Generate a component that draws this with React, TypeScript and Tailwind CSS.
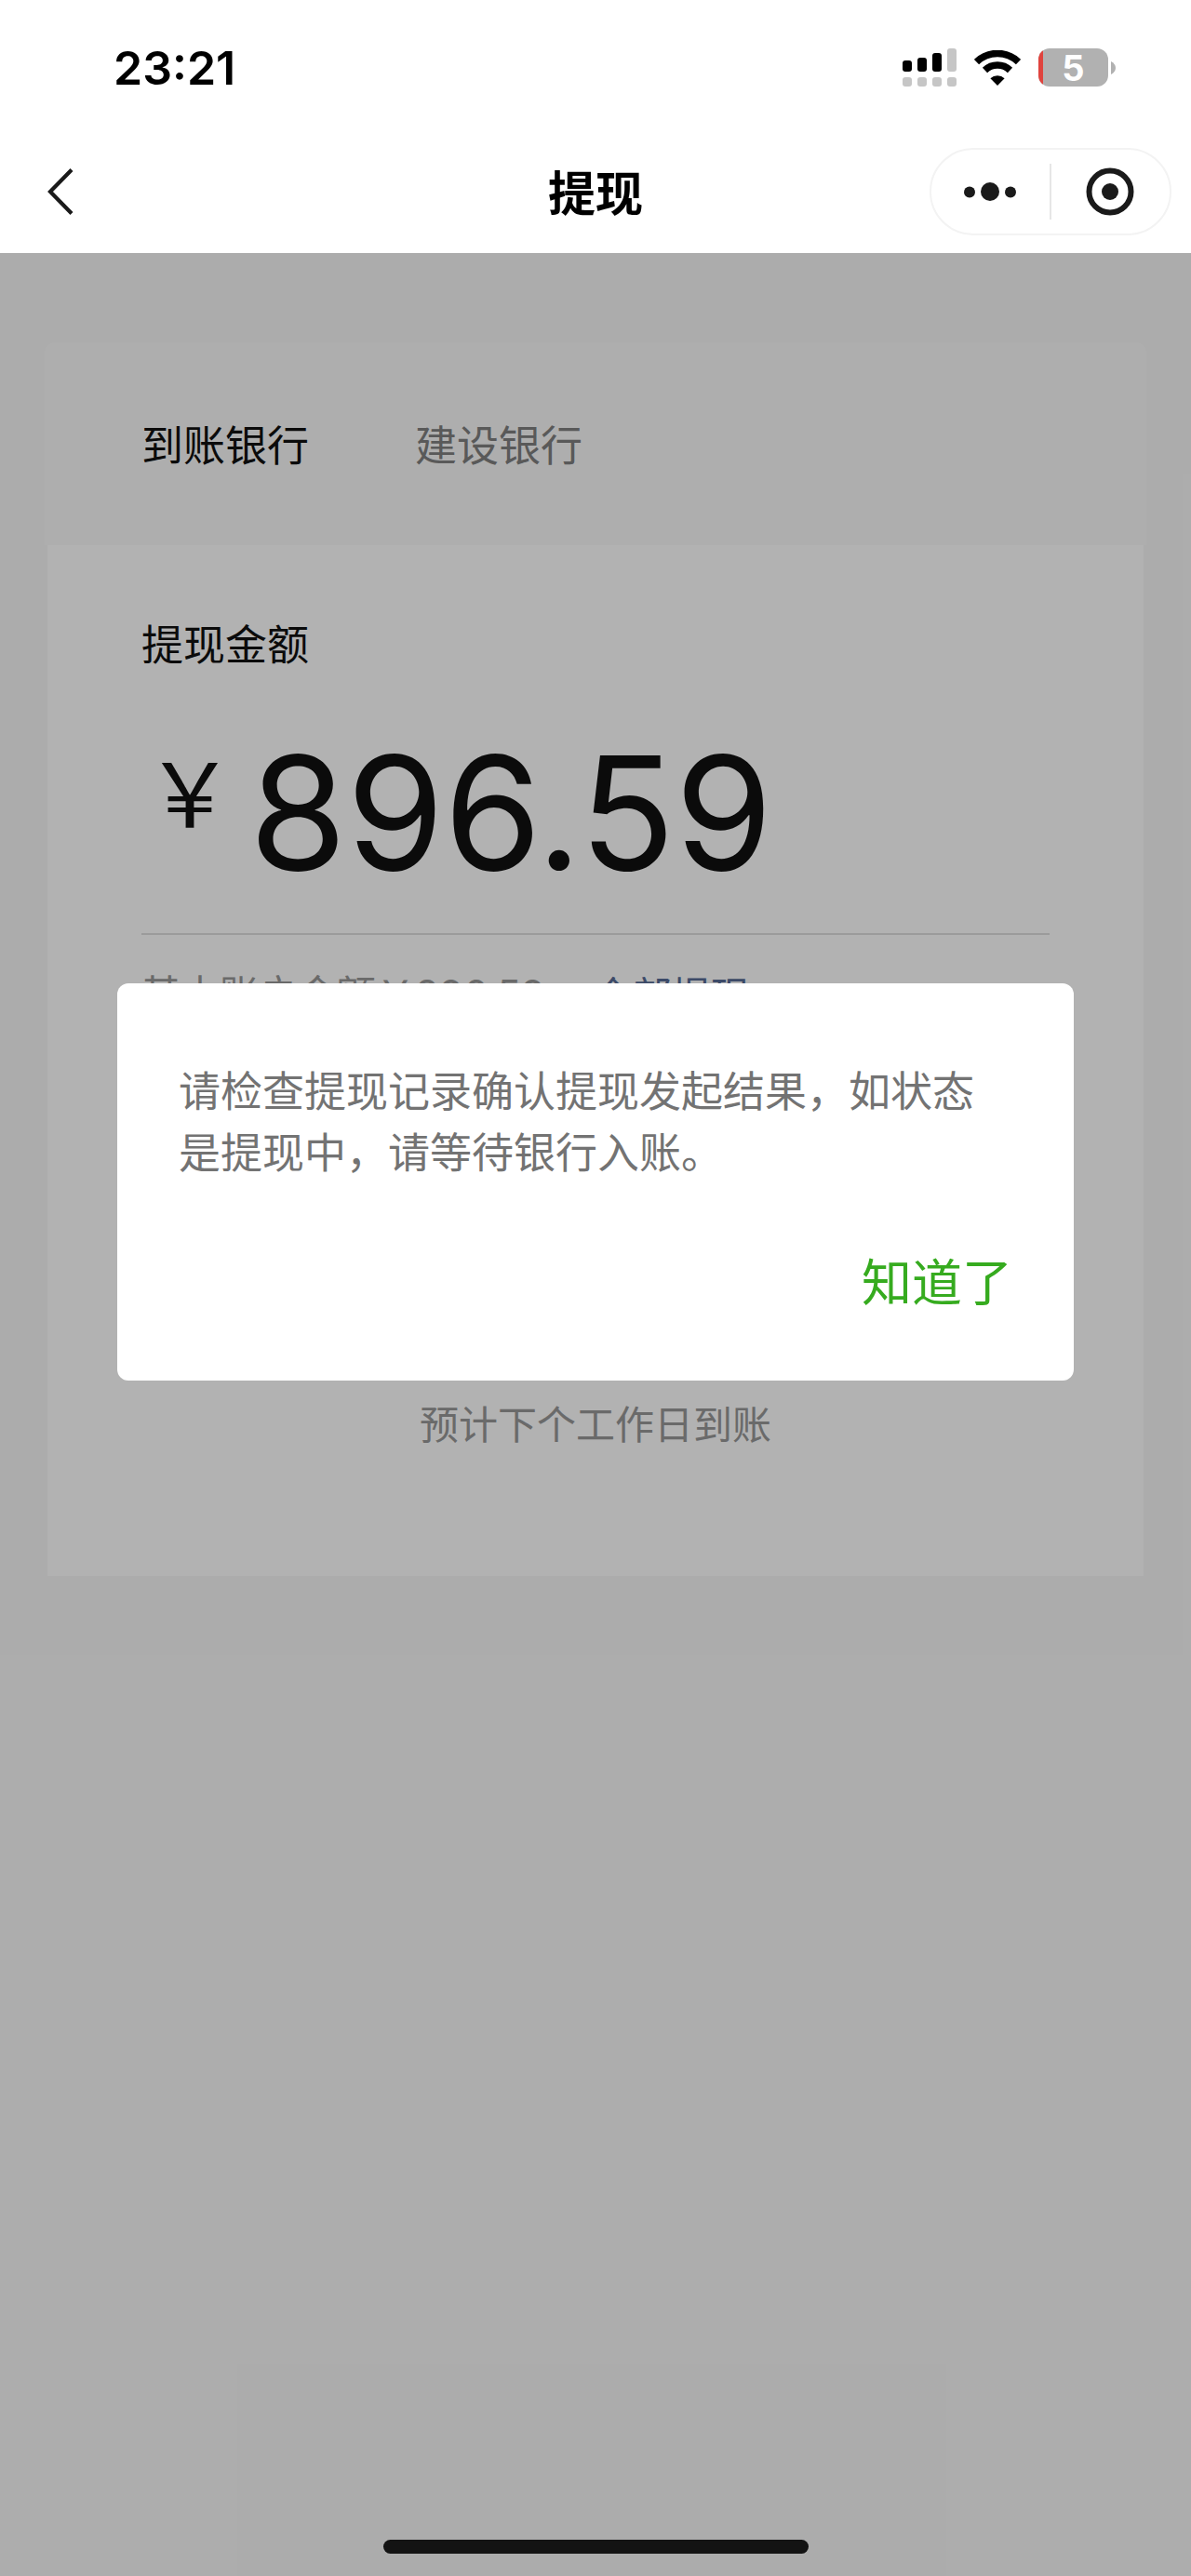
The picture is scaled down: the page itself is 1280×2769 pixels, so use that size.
import { useState } from "react";

const bank = "建设银行";
const amount = "896.59";

function SignalIcon() {
  return (
    <svg width="58" height="41" viewBox="0 0 58 41" aria-hidden="true">
      <rect x="0" y="13" width="10" height="12" rx="3" fill="#000" />
      <rect x="16" y="10" width="10" height="15" rx="3" fill="#000" />
      <rect x="32" y="5" width="10" height="20" rx="3" fill="#000" />
      <rect x="48" y="0" width="10" height="25" rx="3" fill="#c6c6c6" />
      {[0, 16, 32, 48].map((x) => (
        <rect key={x} x={x} y="31" width="10" height="10" rx="3" fill="#c6c6c6" />
      ))}
    </svg>
  );
}

function WifiIcon() {
  return (
    <svg width="50" height="38" viewBox="0 0 50 38" fill="none" aria-hidden="true">
      <path d="M2.5 12.5a32.5 32.5 0 0 1 45 0" stroke="#000" strokeWidth="7.5" />
      <path d="M11.5 21.5a19.5 19.5 0 0 1 27 0" stroke="#000" strokeWidth="7.5" />
      <path d="M25 38l-7.6-7.8a11 11 0 0 1 15.2 0z" fill="#000" />
    </svg>
  );
}

function Battery({ level }: { level: number }) {
  return (
    <div className="flex items-center gap-[3px]">
      <div className="relative flex h-[41px] w-[75px] items-center justify-center">
        <div className="absolute inset-0 overflow-hidden rounded-xl bg-[#b1b1b1]">
          <div className="h-full bg-[#e0443e]" style={{ width: `${level + 1}%` }} />
        </div>
        <span className="relative text-[38px] leading-[48px] font-bold text-white">{level}</span>
      </div>
      <svg width="5" height="14" viewBox="0 0 5 14" aria-hidden="true">
        <path d="M0 0c3 1.500 5 4 5 7s-2 5.500-5 7z" fill="#b1b1b1" />
      </svg>
    </div>
  );
}

function StatusBar() {
  return (
    <div className="flex h-[145px] items-center justify-between pr-[81px] pl-[122px] font-['Inter',sans-serif]">
      <span className="text-[50px] leading-[60px] font-semibold text-black">23:21</span>
      <div className="flex items-center gap-[19px]">
        <SignalIcon />
        <WifiIcon />
        <Battery level={5} />
      </div>
    </div>
  );
}

function NavBar() {
  return (
    <div className="grid h-[127px] grid-cols-3 items-start px-[21px] pt-[14px]">
      <button type="button" aria-label="返回" className="flex h-[94px] w-[94px] items-center pl-[30px]">
        <svg width="28" height="50" viewBox="0 0 28 50" fill="none" aria-hidden="true">
          <path d="M26 1.500L3 25l23 23.500" stroke="#1a1a1a" strokeWidth="4.200" />
        </svg>
      </button>
      <h1 className="text-center text-[51px] leading-[92px] font-bold text-black">提现</h1>
      <div className="flex h-[94px] w-[260px] items-center justify-self-end rounded-full border-2 border-[#f3f3f3]">
        <button type="button" aria-label="更多" className="flex flex-1 justify-center">
          <svg width="56" height="20" viewBox="0 0 56 20" fill="#1a1a1a" aria-hidden="true">
            <circle cx="6" cy="10.500" r="6" />
            <circle cx="28" cy="10" r="10" />
            <circle cx="50" cy="10.500" r="6" />
          </svg>
        </button>
        <span className="h-[60px] w-[2px] bg-[#e6e6e6]" />
        <button type="button" aria-label="关闭" className="flex flex-1 justify-center">
          <svg width="52" height="52" viewBox="0 0 52 52" fill="none" aria-hidden="true">
            <circle cx="26" cy="26" r="22.500" stroke="#1a1a1a" strokeWidth="6" />
            <circle cx="26" cy="26" r="9" fill="#1a1a1a" />
          </svg>
        </button>
      </div>
    </div>
  );
}

export default function App() {
  const [open, setOpen] = useState(true);

  return (
    <div className="flex min-h-screen flex-col bg-[#f7f7f7] font-['Noto_Sans_CJK_SC',sans-serif]">
      <header className="bg-white">
        <StatusBar />
        <NavBar />
      </header>

      <main className="relative flex flex-1 flex-col px-12 pt-24">
        <section className="flex h-[218px] items-center gap-[114px] rounded-t-xl bg-[#fafafa] px-[104px] text-[45px] leading-[66px]">
          <span className="text-[#111]">到账银行</span>
          <span className="text-[#808080]">{bank}</span>
        </section>

        <section className="mx-[3px] bg-white px-[101px] pt-[72px] pb-[132px]">
          <h2 className="text-[45px] leading-[66px] text-[#111]">提现金额</h2>
          <div className="flex items-start gap-4 border-b-2 border-[#dedede] pt-[67px] pb-[46px] pl-1 text-[#111]">
            <span className="text-[96px] leading-[114px]">￥</span>
            <span className="font-['Inter',sans-serif] text-[169px] leading-[166px]">{amount}</span>
          </div>
          <div className="flex gap-[52px] pt-7 text-[42px] leading-[66px]">
            <span className="text-[#999]">
              基本账户金额￥<span className="font-['Inter',sans-serif]">{amount}</span>
            </span>
            <button type="button" className="text-[#576b95]">
              全部提现
            </button>
          </div>
          <p className="pt-[394px] text-center text-[42px] leading-[66px] text-[#999]">
            预计下个工作日到账
          </p>
        </section>

        {open && (
          <div className="absolute inset-0 flex items-start justify-center bg-black/30 px-[126px] pt-[785px]">
            <div role="dialog" aria-modal="true" className="flex w-full flex-col rounded-xl bg-white px-[66px] pt-[81px] pb-[75px]">
              <p className="text-[45px] leading-[66px] text-[#737373]">
                请检查提现记录确认提现发起结果，如状态是提现中，请等待银行入账。
              </p>
              <button
                type="button"
                onClick={() => setOpen(false)}
                className="mt-[73px] self-end text-[54px] leading-[66px] text-[#36ab1f]"
              >
                知道了
              </button>
            </div>
          </div>
        )}

        <div className="relative mt-auto mb-6 h-[15px] w-[457px] self-center rounded-full bg-[#131313]" />
      </main>
    </div>
  );
}
